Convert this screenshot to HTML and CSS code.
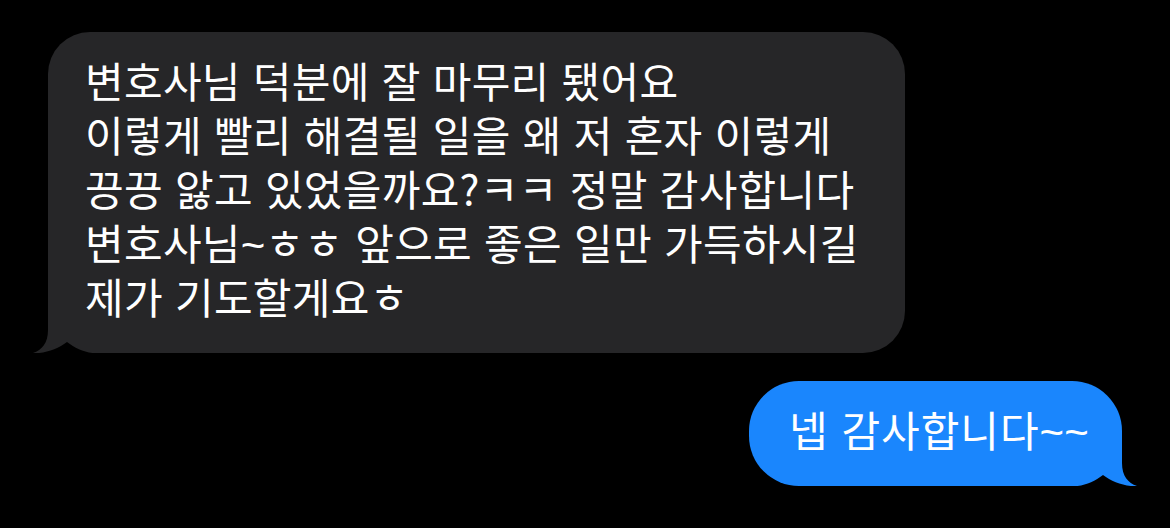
FILE: index.html
```html
<!DOCTYPE html>
<html lang="ko">

<head>
    <meta charset="UTF-8">
    <meta name="viewport" content="width=device-width, initial-scale=1.0">
    <title>메시지</title>
    <link rel="stylesheet" href="styles.css">
</head>

<body>
    <main class="thread">
        <div class="row received">
            <div class="bubble gray">
                <p class="text">변호사님 덕분에 잘 마무리 됐어요<br>이렇게 빨리 해결될 일을 왜 저 혼자 이렇게<br>끙끙 앓고 있었을까요?ㅋㅋ 정말 감사합니다<br>변호사님<span class="tilde">~</span>ㅎㅎ 앞으로 좋은 일만 가득하시길<br>제가 기도할게요ㅎ</p>
                <svg class="tail tail-left" viewBox="0 0 66 24" width="66" height="24">
                    <path fill="#262628" d="M16,0 L16,1 C16,14 10,21 1,24 L17,24 L17,0 Z"/>
                    <path fill="#000" d="M1,24.5 C14,24 26,20 35,13 C44,20 54,24 66,24.5 Z"/>
                </svg>
            </div>
        </div>
        <div class="row sent">
            <div class="bubble blue">
                <p class="text">넵 감사합니다<span class="tilde">~~</span></p>
                <svg class="tail tail-right" viewBox="0 0 66 24" width="66" height="24">
                    <path fill="#1a86fd" d="M50,0 L50,1 C50,14 56,21 65,24 L49,24 L49,0 Z"/>
                    <path fill="#000" d="M65,24.5 C52,24 40,20 31,13 C22,20 12,24 0,24.5 Z"/>
                </svg>
            </div>
        </div>
    </main>
</body>

</html>
```

FILE: styles.css
```css
body {
    margin: 0;
    padding: 0;
    background-color: #000;
    font-family: "Noto Sans CJK KR", "Noto Sans", sans-serif;
    color: #fff;
}

.thread {
    display: flex;
    flex-direction: column;
    gap: 28px;
    padding: 32px 48px 0 48px;
}

.row {
    display: flex;
}

.received {
    justify-content: flex-start;
}

.sent {
    justify-content: flex-end;
}

.bubble {
    position: relative;
    box-sizing: border-box;
    font-size: 42px;
    letter-spacing: 0.3px;
    line-height: 54px;
}

.text {
    margin: 0;
    white-space: nowrap;
}

.gray {
    width: 857px;
    height: 321px;
    background-color: #262628;
    border-radius: 42px 42px 42px 0;
    padding: 21px 40px 0 37px;
}

.blue {
    width: 373px;
    height: 105px;
    background-color: #1a86fd;
    border-radius: 50px 50px 0 50px;
    padding: 21px 20px 0 40px;
    letter-spacing: 1px;
}

.tilde {
    font-family: "Liberation Sans", sans-serif;
    letter-spacing: 0;
    line-height: 0;
}

.tail {
    position: absolute;
    bottom: 0;
    display: block;
}

.tail-left {
    left: -16px;
}

.tail-right {
    right: -16px;
}
```
